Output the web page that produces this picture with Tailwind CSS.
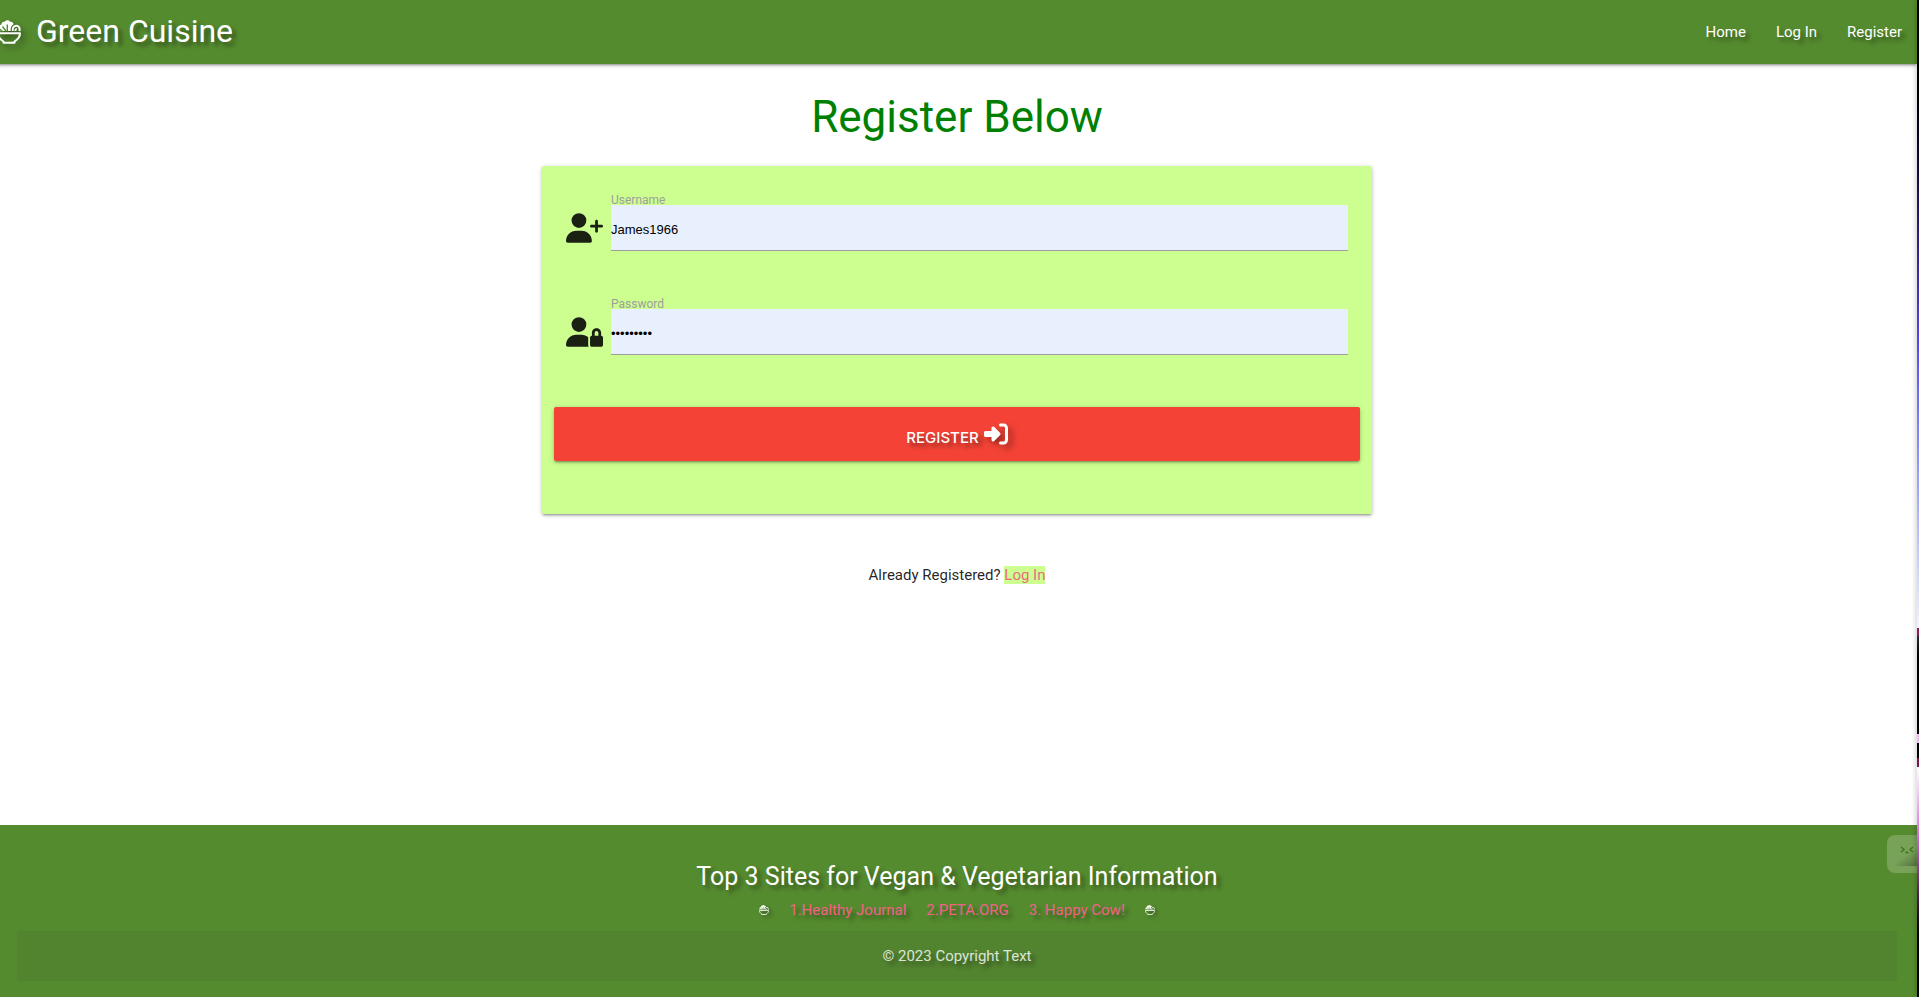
<!DOCTYPE html>
<html lang="en">
<head>
<meta charset="utf-8">
<title>Green Cuisine - Register</title>
<script src="https://cdn.jsdelivr.net/npm/@tailwindcss/browser@4"></script>
</head>
<body class="flex min-h-screen overflow-x-hidden bg-white font-[Roboto,sans-serif] text-[15px] leading-6 text-black/87">
<svg class="hidden">
  <symbol id="bowl" viewBox="0 0 24 24">
    <path fill="currentColor" d="M1 11C0.500 7.500 2 5 4.500 4.500C4.500 2.500 6 1.500 7.500 1.800C9 -0.300 12 -0.300 13.300 1.800C15 1.600 16.500 2.800 16.500 4.300C14.500 5.500 13.600 7.500 13.600 11Z"/>
    <path fill="none" stroke="#558b2f" stroke-width="1.400" d="M10.300 11.500V4.500M9 11L5.500 6.500M5.500 11.500L2.500 9"/>
    <path fill="none" stroke="currentColor" stroke-width="2" d="M15.800 11C15.300 7.800 17 5.800 19.200 5.800C21.800 5.800 23.200 8.200 22.400 11M18.500 11C18.300 9.800 18.800 9 19.800 9"/>
    <path fill="none" stroke="currentColor" stroke-width="2" stroke-linejoin="round" d="M1 13.300H23C23 17 21 19.500 17.500 21.500V22.700H6.500V21.500C3 19.500 1 17 1 13.300Z"/>
  </symbol>
</svg>
<div class="relative -ml-[3px] flex grow flex-col overflow-hidden">
  <header class="relative z-10 bg-[#558b2f] text-white shadow-[0_2px_2px_0_rgba(0,0,0,0.14),0_3px_1px_-2px_rgba(0,0,0,0.12),0_1px_5px_0_rgba(0,0,0,0.2)] text-shadow-[4px_4px_4px_rgba(0,0,0,0.4)]">
    <nav class="flex h-16 items-center justify-between">
      <a href="#" class="flex items-center gap-[15px] text-[32px] leading-10">
        <svg class="size-6 drop-shadow-[4px_4px_3px_rgba(0,0,0,0.4)]"><use href="#bowl"/></svg>
        <span class="pb-[2px]">Green Cuisine</span>
      </a>
      <ul class="flex font-[450]">
        <li><a href="#" class="block px-[15px]">Home</a></li>
        <li><a href="#" class="block px-[15px]">Log In</a></li>
        <li><a href="#" class="block px-[15px]">Register</a></li>
      </ul>
    </nav>
  </header>

  <main class="grow px-3 pt-[25px] text-center">
    <h1 class="text-[44px] leading-[56px] text-[#008000]">Register Below</h1>
    <form class="mx-auto mt-[21px] w-full max-w-[830px] rounded-xs bg-[#ccff90] px-3 pt-[29px] pb-[53px] text-left shadow-[0_2px_2px_0_rgba(0,0,0,0.14),0_3px_1px_-2px_rgba(0,0,0,0.12),0_1px_5px_0_rgba(0,0,0,0.2)]">
      <div class="flex gap-2 px-3">
        <svg class="mt-[18px] h-[30px] w-[37px] shrink-0" viewBox="0 0 640 512" fill="#1b2112"><path d="M96 128a128 128 0 1 1 256 0A128 128 0 1 1 96 128zM0 482.3C0 383.8 79.8 304 178.3 304h91.4C368.2 304 448 383.8 448 482.3c0 16.400-13.300 29.700-29.700 29.700H29.700C13.300 512 0 498.700 0 482.300zM504 312V248H440c-13.300 0-24-10.700-24-24s10.700-24 24-24h64V136c0-13.300 10.700-24 24-24s24 10.700 24 24v64h64c13.300 0 24 10.700 24 24s-10.700 24-24 24H552v64c0 13.300-10.700 24-24 24s-24-10.700-24-24z"/></svg>
        <div class="grow">
          <label for="username" class="block text-xs leading-[10px] text-[#9e9e9e]">Username</label>
          <input id="username" type="text" value="James1966" class="block h-[46px] w-full border-b border-[#9e9e9e] bg-[#e8f0fe] pt-1 font-['Liberation_Sans',sans-serif] text-[13px] text-black outline-none">
        </div>
      </div>
      <div class="mt-12 flex gap-2 px-3">
        <svg class="mt-[18px] h-[30px] w-[37px] shrink-0" viewBox="0 0 640 512" fill="#1b2112"><path d="M224 256A128 128 0 1 0 224 0a128 128 0 1 0 0 256zm-45.700 48C79.800 304 0 383.800 0 482.300C0 498.700 13.300 512 29.700 512H392.600c-5.400-9.400-8.600-20.300-8.600-32V352c0-2.100 .1-4.200 .3-6.300c-31-26-71-41.700-114.600-41.700H178.300zM528 240c17.700 0 32 14.300 32 32v48H496V272c0-17.700 14.300-32 32-32zm-80 32v48c-17.700 0-32 14.300-32 32V480c0 17.700 14.300 32 32 32H608c17.700 0 32-14.300 32-32V352c0-17.700-14.300-32-32-32V272c0-44.200-35.800-80-80-80s-80 35.800-80 80z"/></svg>
        <div class="grow">
          <label for="password" class="block text-xs leading-[10px] text-[#9e9e9e]">Password</label>
          <input id="password" type="password" value="green1966" class="block h-[46px] w-full border-b border-[#9e9e9e] bg-[#e8f0fe] pt-1 font-['Liberation_Sans',sans-serif] text-[13px] text-black outline-none">
        </div>
      </div>
      <button type="submit" class="mt-[52px] flex h-[54px] w-full items-center justify-center gap-[5px] rounded-xs bg-[#f44336] font-[Inter,sans-serif] font-[450] text-white uppercase shadow-[0_2px_2px_0_rgba(0,0,0,0.14),0_3px_1px_-2px_rgba(0,0,0,0.12),0_1px_5px_0_rgba(0,0,0,0.2)] text-shadow-[4px_4px_4px_rgba(0,0,0,0.4)]">
        <span class="pt-[7px]">Register</span>
        <svg class="size-6 drop-shadow-[4px_4px_3px_rgba(0,0,0,0.4)]" viewBox="0 0 512 512" fill="currentColor"><path d="M217.900 105.900L340.700 228.700c7.200 7.200 11.300 17.100 11.300 27.300s-4.100 20.100-11.300 27.300L217.900 406.100c-6.400 6.400-15 9.900-24 9.900c-18.700 0-33.900-15.200-33.900-33.900l0-62.100L32 320c-17.700 0-32-14.300-32-32l0-64c0-17.700 14.300-32 32-32l128 0 0-62.100c0-18.700 15.200-33.900 33.900-33.900c9 0 17.600 3.600 24 9.900zM352 416l64 0c17.700 0 32-14.300 32-32l0-256c0-17.700-14.300-32-32-32l-64 0c-17.700 0-32-14.300-32-32s14.300-32 32-32l64 0c53 0 96 43 96 96l0 256c0 53-43 96-96 96l-64 0c-17.700 0-32-14.300-32-32s14.300-32 32-32z"/></svg>
      </button>
    </form>
    <p class="mt-[49px]">Already Registered? <a href="#" class="bg-[#ccff90] text-[#ee6a84]">Log In</a></p>
  </main>

  <footer class="relative bg-[#558b2f] px-5 pt-9 pb-4 text-center text-white text-shadow-[4px_4px_4px_rgba(0,0,0,0.4)]">
    <h2 class="text-[25px] leading-8">Top 3 Sites for Vegan &amp; Vegetarian Information</h2>
    <ul class="mt-[5px] flex items-center justify-center gap-5 text-[#f06287]">
      <li class="text-white"><svg class="size-[10px] drop-shadow-[3px_3px_2px_rgba(0,0,0,0.4)]"><use href="#bowl"/></svg></li>
      <li><a href="#">1.Healthy Journal</a></li>
      <li><a href="#">2.PETA.ORG</a></li>
      <li><a href="#">3. Happy Cow!</a></li>
      <li class="text-white"><svg class="size-[10px] drop-shadow-[3px_3px_2px_rgba(0,0,0,0.4)]"><use href="#bowl"/></svg></li>
    </ul>
    <p class="mt-[9px] rounded-xs bg-[#333333]/8 py-[13px] text-white/80">© 2023 Copyright Text</p>
    <button type="button" aria-label="Assistant" class="absolute top-[10px] right-0 flex h-[38px] w-[30px] justify-end rounded-l-lg bg-white/20 pt-[11px] pr-[3px]">
      <span class="absolute right-0 bottom-[7px] h-4 w-[22px] bg-linear-to-br from-transparent from-40% to-black/30"></span>
      <svg class="h-2 w-[14px]" viewBox="0 0 14 8" fill="none" stroke="#3f7523" stroke-width="1.500"><path d="M1 1L4 3.500L1 6M13 1L10 3.500L13 6M5.500 6Q7 7.500 8.500 6"/></svg>
    </button>
  </footer>
</div>
<div class="z-20 flex w-[2px] shrink-0 flex-col shadow-[-1px_0_4px_rgba(0,0,0,0.3)]">
  <div class="grow-[628] basis-0 bg-linear-to-b from-black from-10% via-[#5a48f0] via-55% to-[#f2f4fa]"></div>
  <div class="h-[8px] bg-[#8c1a55]"></div>
  <div class="h-[98px] bg-linear-to-b from-[#2a2832] to-black to-30%"></div>
  <div class="h-[9px] bg-[#f3b8ee]"></div>
  <div class="h-[15px] bg-black"></div>
  <div class="h-[9px] bg-[#7a1546]"></div>
  <div class="grow-[230] basis-0 bg-linear-to-b from-white via-[#d765dc] via-30% to-black to-80%"></div>
</div>
</body>
</html>
